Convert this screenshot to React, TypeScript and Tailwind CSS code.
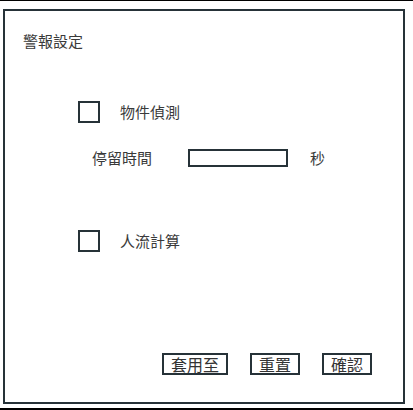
import * as React from "react";

const Checkbox: React.FC<{ label: string }> = ({ label }) => (
  <div className="flex items-center h-[22px] pl-[73px]">
    <span className="w-[22px] h-[22px] border-2 border-[#263238] bg-white" />
    <span className="ml-[20px]">{label}</span>
  </div>
);

const Btn: React.FC<{ label: string; w: string }> = ({ label, w }) => (
  <button
    className={`${w} h-[22px] border-2 border-[#263238] bg-white flex items-center justify-center leading-none text-[16px] text-[#333]`}
  >
    {label}
  </button>
);

export default function App() {
  return (
    <div
      className="w-[413px] h-[410px] bg-white border-t border-black pl-[3px] text-[15px] text-[#3a3a3a] overflow-hidden flex flex-col"
      style={{ fontFamily: '"Noto Sans CJK TC", "Noto Sans", sans-serif' }}
    >
      <div className="mt-[8px] w-[402px] h-[395px] border-2 border-[#263238] flex flex-col">
        <div className="mt-[20px] h-[20px] pl-[18px] flex items-center">警報設定</div>

        <div className="mt-[50px]">
          <Checkbox label="物件偵測" />
        </div>

        <div className="mt-[26px] h-[18px] pl-[87px] flex items-center">
          <span>停留時間</span>
          <span className="ml-[36px] w-[100px] h-[18px] border-2 border-[#263238] bg-white" />
          <span className="ml-[22px]">秒</span>
        </div>

        <div className="mt-[63px]">
          <Checkbox label="人流計算" />
        </div>

        <div className="mt-[101px] flex pl-[157px] gap-[22px]">
          <Btn label="套用至" w="w-[66px]" />
          <Btn label="重置" w="w-[50px]" />
          <Btn label="確認" w="w-[50px]" />
        </div>
      </div>
      <div className="mt-auto -ml-[3px] h-[2px] bg-black" />
    </div>
  );
}
